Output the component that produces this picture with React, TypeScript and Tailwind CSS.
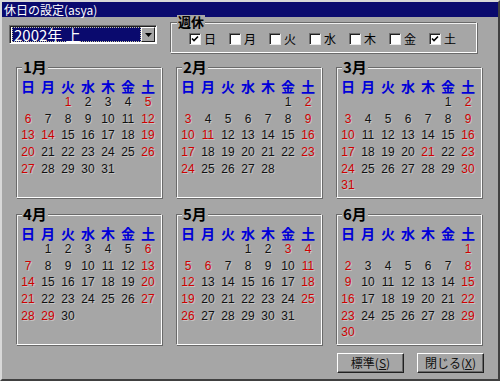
import React from 'react';

const JP = "font-['Noto_Sans_CJK_JP','Liberation_Sans',sans-serif]";
const NUM = "font-['Liberation_Sans','Noto_Sans_CJK_JP',sans-serif]";

const dayNames = ['日', '月', '火', '水', '木', '金', '土'];

// national holidays for the first half of 2002
const holidays: Record<number, number[]> = {
  0: [1, 14],
  1: [11],
  2: [21],
  3: [29],
  4: [3, 4, 6],
  5: [],
};

const Checkbox = ({ checked, label }: { checked: boolean; label: string }) => (
  <div className="flex items-center gap-[3px] w-[40px]">
    <div className="w-[12px] h-[12px] bg-white border border-t-[#6e6e6e] border-l-[#6e6e6e] border-r-[#e8e8e8] border-b-[#e8e8e8] shadow-[inset_1px_1px_0_#202020] flex items-center justify-center">
      {checked && (
        <svg width="8" height="8" viewBox="0 0 8 8">
          <path d="M1 3.5 L3 5.5 L7 1.5" stroke="#000" strokeWidth="1.6" fill="none" />
        </svg>
      )}
    </div>
    <span className={`${JP} text-[12px] leading-none text-black`}>{label}</span>
  </div>
);

const MonthBox = ({ month }: { month: number }) => {
  const first = new Date(2002, month, 1).getDay();
  const days = new Date(2002, month + 1, 0).getDate();
  const cells: (number | null)[] = [];
  for (let i = 0; i < first; i++) cells.push(null);
  for (let d = 1; d <= days; d++) cells.push(d);
  while (cells.length < 42) cells.push(null);

  return (
    <div className="relative w-[146px] h-[131px] border border-t-[#6a6a6a] border-l-[#6a6a6a] border-r-white border-b-white shadow-[inset_1px_1px_0_#f0f0f0,1px_1px_0_#6a6a6a]">
      <div className={`absolute left-[5px] top-[-9px] px-[1px] bg-[#a6a6a6] ${JP} font-bold text-[15px] leading-[16px] text-black`}>
        {month + 1}月
      </div>
      <div className="pl-[1px] pt-[10px]">
        <div className="grid grid-cols-[repeat(7,20px)] h-[16px] items-center">
          {dayNames.map((n) => (
            <div key={n} className={`${JP} text-center font-bold text-[14px] leading-[16px] text-[#0000d8]`}>
              {n}
            </div>
          ))}
        </div>
        <div className="grid grid-cols-[repeat(7,20px)] auto-rows-[16.6px]">
          {cells.map((d, i) => {
            const wd = i % 7;
            const red = d !== null && (wd === 0 || wd === 6 || holidays[month].includes(d));
            return (
              <div
                key={i}
                className={`${NUM} flex items-center justify-center text-[12px] leading-none [text-shadow:1px_1px_0_#c4c4c4] ${red ? 'text-[#d00000]' : 'text-[#111]'}`}
              >
                {d ?? ''}
              </div>
            );
          })}
        </div>
      </div>
    </div>
  );
};

const Button = ({ label, accel }: { label: string; accel: string }) => (
  <div className="w-[67px] h-[20px] bg-[#a6a6a6] border border-t-white border-l-white border-r-[#202020] border-b-[#202020] shadow-[inset_-1px_-1px_0_#6a6a6a] flex items-center justify-center">
    <span className={`${JP} text-[12px] leading-none text-[#111]`}>
      {label}(<span className="underline">{accel}</span>)
    </span>
  </div>
);

export default function App() {
  return (
    <div className="w-[500px] h-[381px] bg-[#a6a6a6] border-2 border-t-[#d8d8d8] border-l-[#d8d8d8] border-r-[#404040] border-b-[#404040] flex flex-col overflow-hidden">
      <div className="h-[15px] bg-[#0a0a6e] flex items-center pl-[2px]">
        <span className={`${JP} text-white text-[12px] leading-none`}>休日の設定(asya)</span>
      </div>

      <div className="flex items-start mt-[2px]">
        <div className="ml-[7px] mt-[6px] w-[148px] h-[19px] bg-white border border-t-[#6a6a6a] border-l-[#6a6a6a] border-r-white border-b-white shadow-[inset_1px_1px_0_#202020] flex p-[1px] pl-[2px]">
          <div className="flex-1 bg-[#0a0a6e] border border-dotted border-[#c8c8a0] flex items-center pl-[1px]">
            <span className={`${JP} text-white text-[15px] leading-none`}>2002年 上</span>
          </div>
          <div className="w-[14px] bg-[#a6a6a6] border border-t-white border-l-white border-r-[#202020] border-b-[#202020] flex items-center justify-center">
            <svg width="7" height="4" viewBox="0 0 7 4">
              <path d="M0 0 H7 L3.5 4 Z" fill="#000" />
            </svg>
          </div>
        </div>

        <div className="relative ml-[13px] mt-[3px] w-[307px] h-[31px] border border-t-[#6a6a6a] border-l-[#6a6a6a] border-r-white border-b-white shadow-[inset_1px_1px_0_#f0f0f0,1px_1px_0_#6a6a6a]">
          <div className={`absolute left-[6px] top-[-8px] px-[1px] bg-[#a6a6a6] ${JP} font-bold text-[13px] leading-[14px] text-black`}>
            週休
          </div>
          <div className="flex pl-[18px] pt-[10px]">
            {dayNames.map((n, i) => (
              <Checkbox key={n} label={n} checked={i === 0 || i === 6} />
            ))}
          </div>
        </div>
      </div>

      <div className="grid grid-cols-[repeat(3,146px)] gap-x-[14px] gap-y-[16px] ml-[14px] mt-[14px]">
        {[0, 1, 2, 3, 4, 5].map((m) => (
          <MonthBox key={m} month={m} />
        ))}
      </div>

      <div className="flex justify-end gap-[13px] mr-[14px] mt-[8px]">
        <Button label="標準" accel="S" />
        <Button label="閉じる" accel="X" />
      </div>
    </div>
  );
}
